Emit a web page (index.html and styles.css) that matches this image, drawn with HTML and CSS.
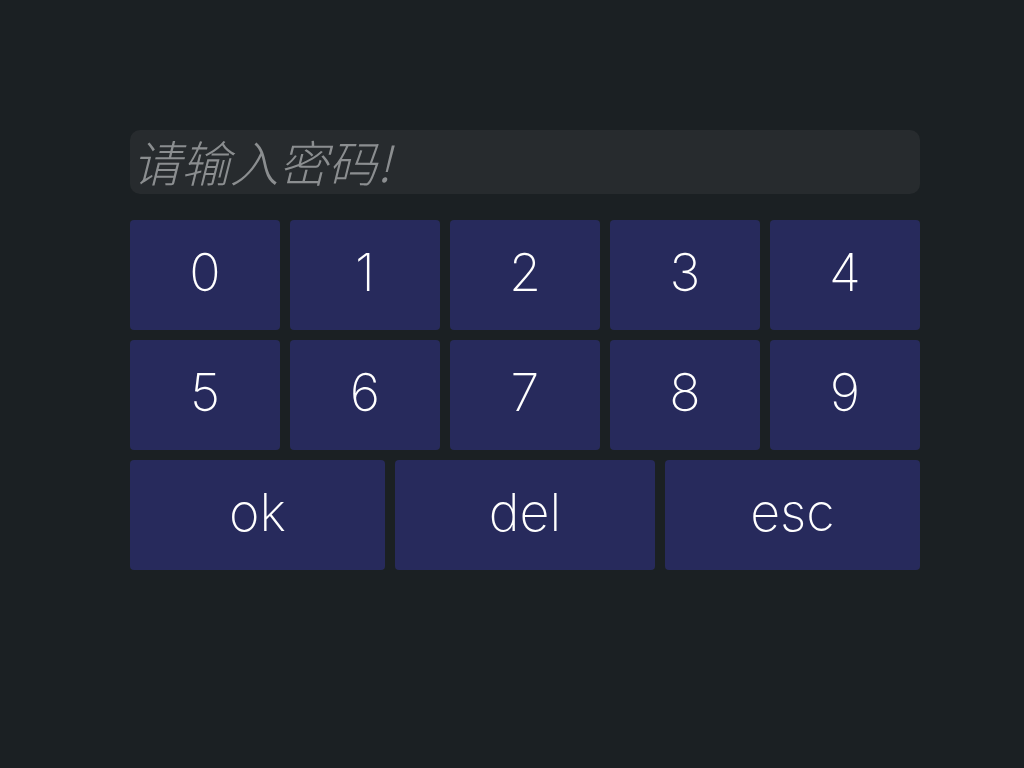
FILE: index.html
```html
<!DOCTYPE html>
<html lang="zh">
<head>
<meta charset="utf-8">
<title>Keypad</title>
<link rel="stylesheet" href="styles.css">
</head>
<body>
<main class="panel">
  <div class="field"><span class="placeholder">请输入密码!</span></div>
  <div class="keys">
    <div class="row row-digits">
      <button class="key">0</button>
      <button class="key">1</button>
      <button class="key">2</button>
      <button class="key">3</button>
      <button class="key">4</button>
    </div>
    <div class="row row-digits">
      <button class="key">5</button>
      <button class="key">6</button>
      <button class="key">7</button>
      <button class="key">8</button>
      <button class="key">9</button>
    </div>
    <div class="row row-actions">
      <button class="key">ok</button>
      <button class="key">del</button>
      <button class="key">esc</button>
    </div>
  </div>
</main>
</body>
</html>
```
FILE: styles.css
```css
html, body {
  margin: 0;
  padding: 0;
  background: #1b2023;
  width: 1024px;
  height: 768px;
  overflow: hidden;
}
.panel {
  width: 790px;
  margin: 130px 0 0 130px;
  display: flex;
  flex-direction: column;
  gap: 26px;
}
.field {
  height: 64px;
  background: #272b2e;
  border-radius: 10px;
  display: flex;
  align-items: center;
  padding-left: 2px;
  box-sizing: border-box;
}
.placeholder {
  font-family: "Noto Sans CJK SC", "Noto Sans", sans-serif;
  font-weight: 300;
  font-style: italic;
  font-size: 49px;
  color: #8b8e90;
  line-height: 1;
  margin-top: -4px;
}
.keys {
  display: flex;
  flex-direction: column;
  gap: 10px;
}
.row {
  display: grid;
  gap: 10px;
  height: 110px;
}
.row-digits { grid-template-columns: repeat(5, 150px); }
.row-actions { grid-template-columns: 255px 260px 255px; }
.key {
  border: 0;
  margin: 0;
  padding: 0 0 4px;
  background: #272a5c;
  border-radius: 4px;
  color: #ffffff;
  font-family: "Inter", "Roboto", sans-serif;
  font-weight: 200;
  font-size: 52px;
  line-height: 1;
  display: flex;
  align-items: center;
  justify-content: center;
}
```
